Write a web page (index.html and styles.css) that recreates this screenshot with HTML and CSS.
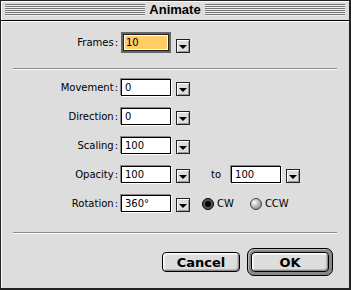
FILE: index.html
```html
<!DOCTYPE html>
<html lang="en">
<head>
    <meta charset="UTF-8">
    <title>Animate</title>
    <link rel="stylesheet" href="styles.css">
</head>
<body>
    <div class="window">
        <div class="titlebar">
            <span class="stripes"></span>
            <span class="title">Animate</span>
            <span class="stripes"></span>
        </div>
        <div class="content">
            <div class="row first">
                <span class="label">Frames<span class="colon">:</span></span>
                <div class="field focus"><span class="sel">10</span></div>
                <span class="popup"></span>
            </div>
            <hr class="sep">
            <div class="row">
                <span class="label">Movement<span class="colon">:</span></span>
                <div class="field">0</div>
                <span class="popup"></span>
            </div>
            <div class="row">
                <span class="label">Direction<span class="colon">:</span></span>
                <div class="field">0</div>
                <span class="popup"></span>
            </div>
            <div class="row">
                <span class="label">Scaling<span class="colon">:</span></span>
                <div class="field">100</div>
                <span class="popup"></span>
            </div>
            <div class="row">
                <span class="label">Opacity<span class="colon">:</span></span>
                <div class="field">100</div>
                <span class="popup"></span>
                <span class="to">to</span>
                <div class="field">100</div>
                <span class="popup"></span>
            </div>
            <div class="row">
                <span class="label">Rotation<span class="colon">:</span></span>
                <div class="field">360°</div>
                <span class="popup"></span>
                <span class="radio first-radio">
                    <svg width="12" height="12" viewBox="0 0 12 12">
                        <circle cx="6" cy="6" r="5.5" fill="#555" stroke="#000"/>
                        <circle cx="6" cy="6" r="3" fill="#000"/>
                    </svg>
                    CW
                </span>
                <span class="radio">
                    <svg width="12" height="12" viewBox="0 0 12 12">
                        <defs>
                            <radialGradient id="ball" cx="0.35" cy="0.35" r="0.7">
                                <stop offset="0" stop-color="#fff"/>
                                <stop offset="1" stop-color="#888"/>
                            </radialGradient>
                        </defs>
                        <circle cx="6" cy="6" r="5.5" fill="url(#ball)" stroke="#444"/>
                    </svg>
                    CCW
                </span>
            </div>
            <hr class="sep bottom">
            <div class="buttons">
                <button class="btn">Cancel</button>
                <div class="default"><button class="btn">OK</button></div>
            </div>
        </div>
    </div>
</body>
</html>
```
FILE: styles.css
```css
body {
    margin: 0;
    background: #ddd;
    font-family: "DejaVu Sans", sans-serif;
}
.window {
    width: 351px;
    height: 290px;
    box-sizing: border-box;
    border: 1px solid #222;
    border-right-width: 2px;
    border-bottom-width: 2px;
    background: #ddd;
    display: flex;
    flex-direction: column;
}
.titlebar {
    height: 19px;
    border-bottom: 1px solid #000;
    display: flex;
    align-items: flex-start;
    gap: 4px;
    padding: 0 4px;
    box-shadow: inset 1px 1px #fff;
}
.stripes {
    flex: 1;
    height: 12px;
    margin-top: 3px;
    background: repeating-linear-gradient(#777 0 1px, #eee 1px 2px);
}
.title {
    font-family: "Liberation Sans", Arial, sans-serif;
    font-weight: bold;
    font-size: 13px;
    line-height: 18px;
    color: #000;
}
.content {
    flex: 1;
    padding-top: 11px;
    box-shadow: inset 1px 1px #fff;
}
.row {
    display: flex;
    align-items: flex-end;
    height: 17px;
    margin-top: 12px;
    font-size: 10px;
}
.row.first {
    height: 21px;
    margin-top: 0;
}
.label {
    width: 117px;
    margin-right: 3px;
    text-align: right;
    align-self: center;
}
.colon {
    margin-left: 1px;
}
.field {
    width: 50px;
    height: 17px;
    box-sizing: border-box;
    border: 1px solid #000;
    background: #fff;
    box-shadow: -1px -1px #888, 1px 1px #fff;
    padding-left: 3px;
    line-height: 15px;
}
.field.focus {
    height: 21px;
    border: 2px solid #666;
    box-shadow: inset 0 0 0 1px #222;
    padding: 2px;
    line-height: 13px;
}
.sel {
    display: block;
    height: 13px;
    padding-left: 1px;
    background: #ffcc66;
}
.popup {
    width: 14px;
    height: 14px;
    margin-left: 5px;
    box-sizing: border-box;
    border: 1px solid #222;
    background: #ddd;
    box-shadow: inset 1px 1px #fff, inset -1px -1px #999;
    display: flex;
    align-items: center;
    justify-content: center;
}
.popup::after {
    content: "";
    border-left: 4px solid transparent;
    border-right: 4px solid transparent;
    border-top: 4px solid #000;
    margin-top: 1px;
}
.to {
    margin: 0 10px 0 21px;
    align-self: center;
}
.radio {
    display: flex;
    align-items: center;
    gap: 3px;
    align-self: center;
    margin-left: 16px;
}
.radio.first-radio {
    margin-left: 12px;
}
.sep {
    height: 0;
    border: 0;
    border-top: 1px solid #888;
    border-bottom: 1px solid #fff;
    margin: 15px 12px 0;
}
.sep + .row {
    margin-top: 9px;
}
.sep.bottom {
    margin-top: 20px;
}
.buttons {
    display: flex;
    justify-content: flex-end;
    align-items: center;
    gap: 7px;
    margin-top: 14px;
    padding-right: 16px;
}
.btn {
    width: 78px;
    height: 20px;
    padding: 0;
    border: 1px solid #000;
    border-radius: 4px;
    background: #ddd;
    box-shadow: inset 1px 1px #fff, inset 2px 2px #eee, inset -1px -1px #888, inset -2px -2px #bbb;
    font-family: "DejaVu Sans", sans-serif;
    font-weight: bold;
    font-size: 13px;
    color: #000;
}
.default {
    padding: 3px;
    border: 1px solid #000;
    border-radius: 7px;
    background: #888;
    box-shadow: inset 1px 1px #bbb;
    display: flex;
}
```
